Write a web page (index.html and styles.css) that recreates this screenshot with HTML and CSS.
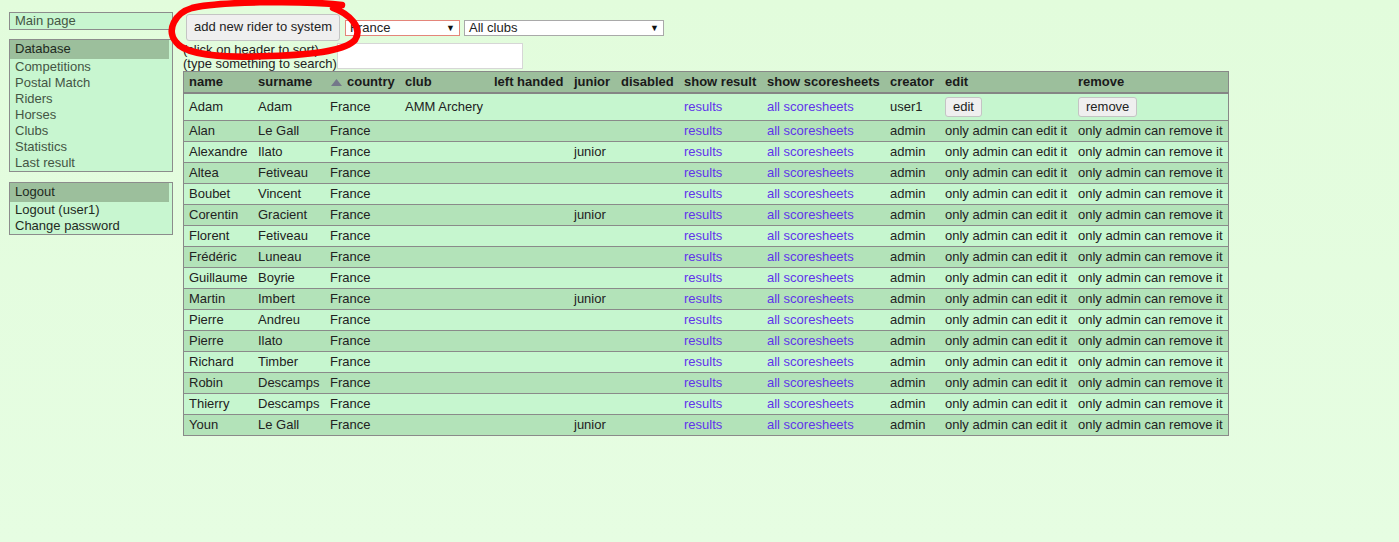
FILE: index.html
```html
<!DOCTYPE html>
<html>
<head>
<meta charset="utf-8">
<title>Riders</title>
<link rel="stylesheet" href="styles.css">
</head>
<body>
<div class="page">
  <aside class="sidebar">
    <div class="box">
      <a class="item link">Main page</a>
    </div>
    <div class="box box-gap1">
      <div class="box-head">Database</div>
      <a class="item link">Competitions</a>
      <a class="item link">Postal Match</a>
      <a class="item link">Riders</a>
      <a class="item link">Horses</a>
      <a class="item link">Clubs</a>
      <a class="item link">Statistics</a>
      <a class="item link">Last result</a>
    </div>
    <div class="box box-gap2">
      <div class="box-head">Logout</div>
      <a class="item dark">Logout (user1)</a>
      <a class="item dark">Change password</a>
    </div>
  </aside>
  <main class="content">
    <div class="toolbar">
      <button class="btn btn-add">add new rider to system</button>
      <div class="select select-country focus"><span>France</span><span class="arrow">▼</span></div>
      <div class="select select-club"><span>All clubs</span><span class="arrow">▼</span></div>
    </div>
    <div class="search-row">
      <div class="hints">(click on header to sort)<br>(type something to search)</div>
      <input class="search" type="text">
    </div>
    <table class="riders">
      <thead>
        <tr>
          <th class="c-name">name</th>
          <th class="c-surname">surname</th>
          <th class="c-country"><svg class="sort" width="11" height="7" viewBox="0 0 11 7"><polygon points="0,7 5.5,0 11,7" fill="#74788a"/></svg>country</th>
          <th class="c-club">club</th>
          <th class="c-left">left handed</th>
          <th class="c-junior">junior</th>
          <th class="c-disabled">disabled</th>
          <th class="c-result">show result</th>
          <th class="c-sheets">show scoresheets</th>
          <th class="c-creator">creator</th>
          <th class="c-edit">edit</th>
          <th class="c-remove">remove</th>
        </tr>
      </thead>
      <tbody>
        <tr class="light first">
          <td>Adam</td><td>Adam</td><td>France</td><td>AMM Archery</td><td></td><td></td><td></td>
          <td><a class="tlink">results</a></td><td><a class="tlink">all scoresheets</a></td><td>user1</td>
          <td><button class="btn btn-small">edit</button></td><td><button class="btn btn-small">remove</button></td>
        </tr>
        <tr class="dark"><td>Alan</td><td>Le Gall</td><td>France</td><td></td><td></td><td></td><td></td><td><a class="tlink">results</a></td><td><a class="tlink">all scoresheets</a></td><td>admin</td><td>only admin can edit it</td><td>only admin can remove it</td></tr>
        <tr class="light"><td>Alexandre</td><td>Ilato</td><td>France</td><td></td><td></td><td>junior</td><td></td><td><a class="tlink">results</a></td><td><a class="tlink">all scoresheets</a></td><td>admin</td><td>only admin can edit it</td><td>only admin can remove it</td></tr>
        <tr class="dark"><td>Altea</td><td>Fetiveau</td><td>France</td><td></td><td></td><td></td><td></td><td><a class="tlink">results</a></td><td><a class="tlink">all scoresheets</a></td><td>admin</td><td>only admin can edit it</td><td>only admin can remove it</td></tr>
        <tr class="light"><td>Boubet</td><td>Vincent</td><td>France</td><td></td><td></td><td></td><td></td><td><a class="tlink">results</a></td><td><a class="tlink">all scoresheets</a></td><td>admin</td><td>only admin can edit it</td><td>only admin can remove it</td></tr>
        <tr class="dark"><td>Corentin</td><td>Gracient</td><td>France</td><td></td><td></td><td>junior</td><td></td><td><a class="tlink">results</a></td><td><a class="tlink">all scoresheets</a></td><td>admin</td><td>only admin can edit it</td><td>only admin can remove it</td></tr>
        <tr class="light"><td>Florent</td><td>Fetiveau</td><td>France</td><td></td><td></td><td></td><td></td><td><a class="tlink">results</a></td><td><a class="tlink">all scoresheets</a></td><td>admin</td><td>only admin can edit it</td><td>only admin can remove it</td></tr>
        <tr class="dark"><td>Frédéric</td><td>Luneau</td><td>France</td><td></td><td></td><td></td><td></td><td><a class="tlink">results</a></td><td><a class="tlink">all scoresheets</a></td><td>admin</td><td>only admin can edit it</td><td>only admin can remove it</td></tr>
        <tr class="light"><td>Guillaume</td><td>Boyrie</td><td>France</td><td></td><td></td><td></td><td></td><td><a class="tlink">results</a></td><td><a class="tlink">all scoresheets</a></td><td>admin</td><td>only admin can edit it</td><td>only admin can remove it</td></tr>
        <tr class="dark"><td>Martin</td><td>Imbert</td><td>France</td><td></td><td></td><td>junior</td><td></td><td><a class="tlink">results</a></td><td><a class="tlink">all scoresheets</a></td><td>admin</td><td>only admin can edit it</td><td>only admin can remove it</td></tr>
        <tr class="light"><td>Pierre</td><td>Andreu</td><td>France</td><td></td><td></td><td></td><td></td><td><a class="tlink">results</a></td><td><a class="tlink">all scoresheets</a></td><td>admin</td><td>only admin can edit it</td><td>only admin can remove it</td></tr>
        <tr class="dark"><td>Pierre</td><td>Ilato</td><td>France</td><td></td><td></td><td></td><td></td><td><a class="tlink">results</a></td><td><a class="tlink">all scoresheets</a></td><td>admin</td><td>only admin can edit it</td><td>only admin can remove it</td></tr>
        <tr class="light"><td>Richard</td><td>Timber</td><td>France</td><td></td><td></td><td></td><td></td><td><a class="tlink">results</a></td><td><a class="tlink">all scoresheets</a></td><td>admin</td><td>only admin can edit it</td><td>only admin can remove it</td></tr>
        <tr class="dark"><td>Robin</td><td>Descamps</td><td>France</td><td></td><td></td><td></td><td></td><td><a class="tlink">results</a></td><td><a class="tlink">all scoresheets</a></td><td>admin</td><td>only admin can edit it</td><td>only admin can remove it</td></tr>
        <tr class="light"><td>Thierry</td><td>Descamps</td><td>France</td><td></td><td></td><td></td><td></td><td><a class="tlink">results</a></td><td><a class="tlink">all scoresheets</a></td><td>admin</td><td>only admin can edit it</td><td>only admin can remove it</td></tr>
        <tr class="dark"><td>Youn</td><td>Le Gall</td><td>France</td><td></td><td></td><td>junior</td><td></td><td><a class="tlink">results</a></td><td><a class="tlink">all scoresheets</a></td><td>admin</td><td>only admin can edit it</td><td>only admin can remove it</td></tr>
      </tbody>
    </table>
  </main>
</div>
<svg class="annotation" width="380" height="62" viewBox="0 0 380 62">
  <path d="M 342 5 C 300 0, 215 2, 192 8 C 175 13, 166 30, 176 42 C 186 56, 230 58, 270 56 C 310 55, 345 51, 355 40 C 363 28, 350 14, 333 8" fill="none" stroke="#ff0000" stroke-width="6.5" stroke-linecap="round" stroke-linejoin="round"/>
</svg>
</body>
</html>
```
FILE: styles.css
```css
html, body {
  margin: 0;
  padding: 0;
}
body {
  background: linear-gradient(to bottom, #e2fcdc, #e6fde2);
  min-height: 542px;
  font-family: "Liberation Sans", Arial, sans-serif;
  font-size: 13px;
  color: #222;
}
.page {
  display: flex;
  align-items: flex-start;
  gap: 10px;
  padding: 12px 0 0 9px;
}
.sidebar {
  width: 164px;
  flex: none;
  display: flex;
  flex-direction: column;
}
.box {
  border: 1px solid #8c8c8c;
  background: #c8f6d0;
  display: flex;
  flex-direction: column;
}
.box-gap1 { margin-top: 9px; }
.box-gap2 { margin-top: 10px; }
.box-head {
  background: #9cbf9c;
  line-height: 18px;
  height: 18px;
  padding: 0 5px 1px;
  margin-right: 3px;
  color: #1e2a1e;
}
.item {
  line-height: 16px;
  padding: 0 5px;
  white-space: nowrap;
}
.item.link { color: #445544; }
.item.dark { color: #1f2a1f; }

.content {
  margin-top: 2px;
  display: flex;
  flex-direction: column;
  align-items: flex-start;
}
.toolbar {
  display: flex;
  align-items: center;
  height: 27px;
}
.btn {
  font-family: "Liberation Sans", Arial, sans-serif;
  font-size: 13px;
  color: #222;
  background: #efefef;
  border: 1px solid #c4c4c4;
  border-radius: 3px;
  margin: 0;
}
.btn-add {
  height: 27px;
  width: 154px;
  padding: 0 0 2px;
  margin-left: 3px;
}
.select {
  height: 16px;
  box-sizing: border-box;
  border: 1px solid #a9a9a9;
  background: #fff;
  display: flex;
  align-items: center;
  justify-content: space-between;
  padding: 0 4px 0 4px;
  line-height: 14px;
  font-size: 13px;
  color: #222;
}
.select.focus { border-color: #e4857a; }
.select-country { width: 115px; margin-left: 5px; }
.select-club { width: 200px; margin-left: 4px; }
.arrow {
  font-size: 9px;
  color: #111;
}
.search-row {
  display: flex;
  align-items: flex-start;
  margin-top: 1px;
}
.hints {
  line-height: 14px;
  white-space: nowrap;
  color: #222;
  padding-top: 1px;
}
.search {
  width: 186px;
  height: 26px;
  box-sizing: border-box;
  border: 1px solid #d6d6d6;
  background: #fff;
  margin: 1px 0 0;
  padding: 0 3px;
}
.riders {
  margin-top: 0;
  border-collapse: collapse;
  border: 1px solid #888;
}
.riders th, .riders td {
  padding: 2px 5px;
  line-height: 16px;
  text-align: left;
  white-space: nowrap;
  vertical-align: middle;
}
.riders th {
  background: #9cbf9c;
  font-weight: bold;
  border-bottom: 2px solid #858585;
  color: #1a1a1a;
}
.c-name { width: 59px; }
.c-surname { width: 62px; }
.c-country { width: 65px; }
.c-club { width: 79px; }
.c-left { width: 70px; }
.c-junior { width: 37px; }
.c-disabled { width: 53px; }
.c-result { width: 73px; }
.c-sheets { width: 113px; }
.c-creator { width: 45px; }
.c-edit { width: 123px; }
.c-remove { width: 145px; }
.riders td {
  border-bottom: 1px solid #8a8a8a;
}
.sort {
  margin: 0 5px 0 1px;
  vertical-align: 0;
}
tr.light td { background: #c6f6cf; }
tr.dark td { background: #b3e3b9; }
tr.first td {
  height: 22px;
}
.tlink { color: #5f34ea; }
.btn-small {
  height: 20px;
  padding: 0 7px 1px;
  vertical-align: middle;
}
.annotation {
  position: absolute;
  left: 0;
  top: 0;
  pointer-events: none;
}
```
